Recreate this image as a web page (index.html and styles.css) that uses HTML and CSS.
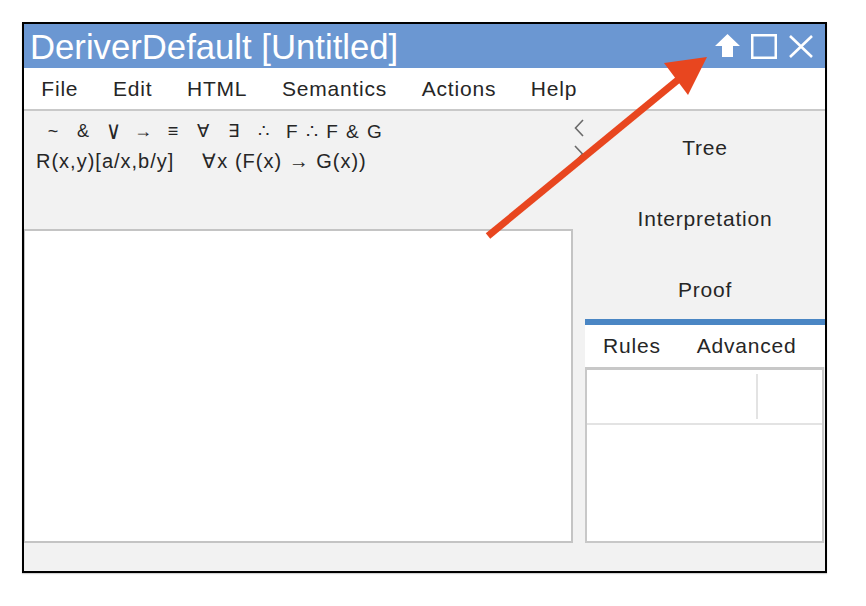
FILE: index.html
```html
<!DOCTYPE html>
<html>
<head>
<meta charset="utf-8">
<link rel="stylesheet" href="styles.css">
</head>
<body>
<div class="window">
  <div class="titlebar">
    <div class="title">DeriverDefault [Untitled]</div>
    <div class="controls">
      <svg class="ctl ctl-up" viewBox="0 0 25 24"><polygon points="12.5,0 25,12 18,12 18,23 7,23 7,12 0,12" fill="#fff"/></svg>
      <svg class="ctl ctl-max" viewBox="0 0 26 25"><rect x="1.25" y="1.25" width="23.5" height="22.5" fill="none" stroke="#fff" stroke-width="2.5"/></svg>
      <svg class="ctl ctl-close" viewBox="0 0 24 23"><path d="M1 1 L23 22 M23 1 L1 22" stroke="#fff" stroke-width="2.6" fill="none"/></svg>
    </div>
  </div>
  <div class="menubar">
    <span class="menu">File</span>
    <span class="menu">Edit</span>
    <span class="menu">HTML</span>
    <span class="menu">Semantics</span>
    <span class="menu">Actions</span>
    <span class="menu">Help</span>
  </div>
  <div class="body">
    <div class="main">
      <div class="leftcol">
        <div class="toolbar">
          <div class="symrow">
            <span class="sym">~</span>
            <span class="sym">&amp;</span>
            <span class="sym"><span class="sym-or">∨</span></span>
            <span class="sym">→</span>
            <span class="sym">≡</span>
            <span class="sym">∀</span>
            <span class="sym">∃</span>
            <span class="sym">∴</span>
            <span class="sym-text">F ∴ F &amp; G</span>
          </div>
          <div class="exrow">
            <span class="ex">R(x,y)[a/x,b/y]</span>
            <span class="ex">∀x (F(x) → G(x))</span>
          </div>
        </div>
        <div class="editor"></div>
      </div>
      <div class="scroller">
        <svg class="chev" viewBox="0 0 10 18"><path d="M9 1 L1.5 9 L9 17" fill="none" stroke="#6a6a6a" stroke-width="1.6"/></svg>
        <svg class="chev chev-next" viewBox="0 0 10 18"><path d="M1 1 L8.5 9 L1 17" fill="none" stroke="#6a6a6a" stroke-width="1.6"/></svg>
      </div>
      <div class="rightcol">
        <div class="sidetabs">
          <div class="sidetab">Tree</div>
          <div class="sidetab">Interpretation</div>
          <div class="sidetab">Proof</div>
        </div>
        <div class="accent"></div>
        <div class="subtabs">
          <span class="subtab">Rules</span>
          <span class="subtab">Advanced</span>
        </div>
        <div class="table">
          <div class="thead">
            <div class="th th-wide"></div>
            <div class="th"></div>
          </div>
          <div class="tbody"></div>
        </div>
      </div>
    </div>
    <div class="status"></div>
  </div>
</div>
<svg class="pointer" viewBox="0 0 866 606" width="866" height="606">
  <line x1="488" y1="236" x2="679" y2="79" stroke="#e8461f" stroke-width="7"/>
  <polygon points="707,57 664,63 688,95" fill="#e8461f"/>
</svg>
</body>
</html>
```

FILE: styles.css
```css
* { box-sizing: border-box; }

html, body {
  margin: 0;
  padding: 0;
  background: #fff;
}

body {
  width: 866px;
  height: 606px;
  position: relative;
  font-family: "Liberation Sans", Arial, sans-serif;
  color: #262626;
  overflow: hidden;
}

.window {
  margin: 22px 0 0 22px;
  width: 805px;
  height: 551px;
  border: 2px solid #000;
  display: flex;
  flex-direction: column;
  box-shadow: 0 1px 1px rgba(0, 0, 0, 0.18);
}

/* title bar */
.titlebar {
  height: 44px;
  background: #6b97d2;
  display: flex;
  align-items: center;
  justify-content: space-between;
  padding: 0 12px 0 6px;
  flex: none;
}

.title {
  color: #fff;
  font-size: 34.7px;
  line-height: 44px;
  white-space: nowrap;
  padding-top: 1px;
}

.controls {
  display: flex;
  align-items: center;
  gap: 11px;
}

.ctl { display: block; }
.ctl-up { width: 25px; height: 24px; margin-top: -1px; }
.ctl-max { width: 26px; height: 25px; }
.ctl-close { width: 24px; height: 23px; margin-left: 1px; }

/* menu bar */
.menubar {
  height: 43px;
  background: #fff;
  border-bottom: 2px solid #c9c9c9;
  display: flex;
  align-items: center;
  flex: none;
}

.menu {
  font-size: 21px;
  letter-spacing: 0.8px;
  padding: 0 17.3px;
  line-height: 41px;
}

/* body */
.body {
  flex: 1;
  background: #f2f2f2;
  display: flex;
  flex-direction: column;
}

.main {
  height: 432px;
  display: flex;
}

.leftcol {
  width: 549px;
  display: flex;
  flex-direction: column;
}

.toolbar {
  height: 118px;
  padding: 7px 0 0 12px;
  font-size: 20px;
}

.symrow {
  display: flex;
  align-items: center;
  height: 26px;
  padding-left: 2px;
}

.sym {
  width: 30px;
  text-align: center;
  font-size: 18px;
}

/* the "or" wedge is drawn taller than the fallback glyph */
.sym-or {
  display: inline-block;
  transform: scale(1.15, 1.4);
  transform-origin: 50% 60%;
}

.sym-text {
  margin-left: 8px;
  letter-spacing: 1.5px;
  font-size: 19px;
}

.exrow {
  display: flex;
  align-items: center;
  height: 26px;
  margin-top: 4px;
  gap: 28px;
  letter-spacing: 1px;
}

.editor {
  flex: 1;
  background: #fff;
  border: 2px solid #c4c4c4;
  border-left-width: 1px;
}

.scroller {
  width: 12px;
  padding-top: 8px;
  display: flex;
  flex-direction: column;
  align-items: center;
}

.chev {
  width: 10px;
  height: 18px;
  display: block;
}

.chev-next {
  margin-top: 8px;
}

.rightcol {
  width: 240px;
  display: flex;
  flex-direction: column;
}

.sidetabs {
  height: 208px;
  padding-top: 1px;
  overflow: hidden;
}

.sidetab {
  height: 71px;
  line-height: 71px;
  text-align: center;
  font-size: 21px;
  letter-spacing: 0.8px;
}

.accent {
  height: 6px;
  background: #4a86c4;
}

.subtabs {
  height: 42px;
  background: #fff;
  display: flex;
  align-items: center;
}

.subtab {
  font-size: 21px;
  letter-spacing: 0.8px;
  padding: 0 18px;
}

.table {
  flex: 1;
  background: #fff;
  border: 2px solid #c8c8c8;
  border-top-width: 3px;
  margin-right: 1px;
  display: flex;
  flex-direction: column;
}

.thead {
  height: 55px;
  display: flex;
  border-bottom: 2px solid #e3e3e3;
  padding: 4px 0;
}

.th-wide {
  width: 171px;
  border-right: 2px solid #e3e3e3;
}

.th { flex: none; }

.tbody { flex: 1; }

.status {
  flex: 1;
}

/* annotation overlay */
.pointer {
  position: absolute;
  left: 0;
  top: 0;
  pointer-events: none;
}
```
